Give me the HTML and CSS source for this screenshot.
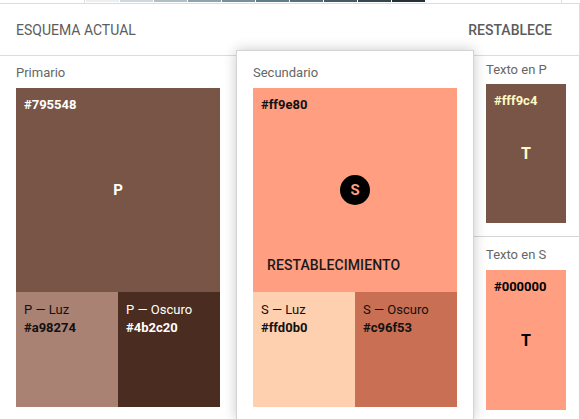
FILE: index.html
```html
<!DOCTYPE html>
<html lang="es">
<head>
<meta charset="utf-8">
<title>Esquema actual</title>
<link rel="stylesheet" href="styles.css">
</head>
<body>
<div class="strip">
  <div class="strip-lead"></div>
  <div class="sw s50"></div><div class="sw s100"></div><div class="sw s200"></div><div class="sw s300"></div><div class="sw s400"></div>
  <div class="sw s500"></div><div class="sw s600"></div><div class="sw s700"></div><div class="sw s800"></div><div class="sw s900"></div>
  <div class="strip-tail"></div>
</div>
<header class="header">
  <span class="title">ESQUEMA ACTUAL</span>
  <span class="reset">RESTABLECE</span>
</header>
<main class="main">
  <section class="col col-primary">
    <div class="label">Primario</div>
    <div class="swatch sw-primary">
      <span class="hex">#795548</span>
      <span class="letter">P</span>
    </div>
    <div class="subs">
      <div class="sub sub-pl"><span class="sub-name">P — Luz</span><span class="sub-hex">#a98274</span></div>
      <div class="sub sub-pd"><span class="sub-name">P — Oscuro</span><span class="sub-hex">#4b2c20</span></div>
    </div>
  </section>
  <section class="col card">
    <div class="label">Secundario</div>
    <div class="swatch sw-secondary">
      <span class="hex">#ff9e80</span>
      <span class="circle">S</span>
      <span class="btn">RESTABLECIMIENTO</span>
    </div>
    <div class="subs">
      <div class="sub sub-sl"><span class="sub-name">S — Luz</span><span class="sub-hex">#ffd0b0</span></div>
      <div class="sub sub-sd"><span class="sub-name">S — Oscuro</span><span class="sub-hex">#c96f53</span></div>
    </div>
  </section>
  <section class="col col-text">
    <div class="tsec tsec-p">
      <div class="label">Texto en P</div>
      <div class="tswatch ts-p">
        <span class="hex">#fff9c4</span>
        <span class="tletter">T</span>
      </div>
    </div>
    <div class="tsec tsec-s">
      <div class="label">Texto en S</div>
      <div class="tswatch ts-s">
        <span class="hex">#000000</span>
        <span class="tletter">T</span>
      </div>
    </div>
  </section>
</main>
</body>
</html>
```

FILE: styles.css
```css
* { box-sizing: border-box; }
html, body { margin: 0; padding: 0; }
body {
  width: 580px;
  height: 419px;
  overflow: hidden;
  background: #fff;
  font-family: Roboto, "Liberation Sans", Arial, sans-serif;
  color: #212121;
}
.strip {
  display: flex;
  height: 3px;
  gap: 1px;
}
.strip-lead { width: 85px; border-right: 1px solid #e0e0e0; }
.strip-tail { width: 136px; border-right: 1px solid #e0e0e0; }
.sw { width: 33px; height: 2px; }
.s50 { background: #eceff1; }
.s100 { background: #cfd8dc; }
.s200 { background: #b0bec5; }
.s300 { background: #90a4ae; }
.s400 { background: #78909c; }
.s500 { background: #607d8b; }
.s600 { background: #546e7a; }
.s700 { background: #455a64; }
.s800 { background: #37474f; }
.s900 { background: #263238; }

.header {
  display: flex;
  justify-content: space-between;
  align-items: center;
  height: 53px;
  width: 580px;
  padding: 0 27px 0 16px;
  border-top: 1px solid #dcdcdc;
  border-bottom: 1px solid #dcdcdc;
  border-right: 1px solid #dcdcdc;
  font-size: 14px;
  color: #5c5c5c;
}
.title { font-weight: 400; }
.reset { font-weight: 500; }

.main {
  display: flex;
  align-items: flex-start;
  height: 363px;
}
.label {
  font-size: 13px;
  line-height: 16px;
  color: #666;
}
.col-primary {
  width: 236px;
  padding: 9px 16px 0;
}
.col-primary .label { margin-bottom: 7px; }
.card {
  position: relative;
  z-index: 2;
  width: 238px;
  height: 369px;
  margin-top: -6px;
  padding: 14px 16px 0;
  background: #fff;
  border: 1px solid #d4d4d4;
  border-bottom: 0;
  box-shadow: 0 0 12px rgba(0, 0, 0, 0.22);
}
.card .label { margin-bottom: 7px; }

.swatch {
  display: grid;
  width: 204px;
  height: 204px;
}
.swatch > * { grid-area: 1 / 1; }
.hex {
  align-self: start;
  justify-self: start;
  margin: 9px 8px 0;
  font-size: 13px;
  line-height: 16px;
  font-weight: 700;
}
.sw-primary { background: #795548; color: #fff; }
.sw-secondary { background: #ff9e80; color: #111; }
.letter {
  place-self: center;
  font-size: 15px;
  font-weight: 700;
  color: #fff;
}
.circle {
  place-self: center;
  width: 30px;
  height: 30px;
  border-radius: 50%;
  background: #000;
  color: #ff9e80;
  font-size: 15px;
  font-weight: 700;
  display: flex;
  align-items: center;
  justify-content: center;
}
.btn {
  align-self: end;
  justify-self: start;
  margin: 0 0 9px 6px;
  padding: 0 8px;
  height: 36px;
  line-height: 36px;
  font-size: 14px;
  font-weight: 500;
  letter-spacing: 0.1px;
  color: #1a1a1a;
}
.subs {
  display: flex;
  width: 204px;
}
.sub {
  display: flex;
  flex-direction: column;
  gap: 2px;
  width: 102px;
  height: 115px;
  padding: 10px 8px 0;
  font-size: 13px;
  line-height: 16px;
}
.sub-hex { font-weight: 700; }
.sub-pl { background: #a98274; color: #111; }
.sub-pd { background: #4b2c20; color: #fff; }
.sub-sl { background: #ffd0b0; color: #111; }
.sub-sd { background: #c96f53; color: #111; }

.col-text {
  width: 106px;
  height: 363px;
  border-right: 1px solid #d4d4d4;
}
.tsec { padding: 0 12px; }
.tsec-p {
  padding-top: 6px;
  height: 181px;
  border-bottom: 1px solid #d4d4d4;
}
.tsec-s { padding-top: 10px; }
.tsec .label { margin-bottom: 6px; }
.tsec-s .label { margin-bottom: 7px; }
.tswatch {
  display: grid;
  width: 80px;
}
.tswatch > * { grid-area: 1 / 1; }
.ts-p { height: 139px; background: #795548; color: #fff9c4; }
.ts-s { height: 140px; background: #ff9e80; color: #000; }
.tletter {
  place-self: center;
  font-size: 16px;
  font-weight: 700;
}
```
